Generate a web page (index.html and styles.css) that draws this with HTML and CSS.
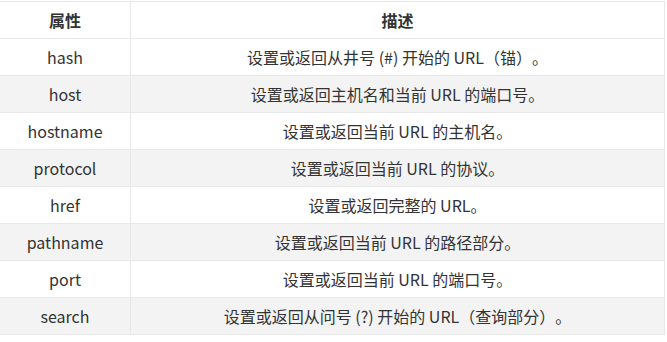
FILE: index.html
```html
<!DOCTYPE html>
<html lang="zh">
<head>
<meta charset="utf-8">
<link rel="stylesheet" href="styles.css">
</head>
<body>
<table class="ref">
  <colgroup><col class="c1"><col class="c2"></colgroup>
  <thead>
    <tr><th>属性</th><th>描述</th></tr>
  </thead>
  <tbody>
    <tr><td>hash</td><td>设置或返回从井号 (#) 开始的 URL（锚）。</td></tr>
    <tr><td>host</td><td>设置或返回主机名和当前 URL 的端口号。</td></tr>
    <tr><td>hostname</td><td>设置或返回当前 URL 的主机名。</td></tr>
    <tr><td>protocol</td><td>设置或返回当前 URL 的协议。</td></tr>
    <tr><td>href</td><td>设置或返回完整的 URL。</td></tr>
    <tr><td>pathname</td><td>设置或返回当前 URL 的路径部分。</td></tr>
    <tr><td>port</td><td>设置或返回当前 URL 的端口号。</td></tr>
    <tr><td>search</td><td>设置或返回从问号 (?) 开始的 URL（查询部分）。</td></tr>
  </tbody>
</table>
</body>
</html>
```

FILE: styles.css
```css
html, body {
  margin: 0;
  padding: 0;
  background: #fff;
}
body {
  padding-top: 1px;
  font-family: "Noto Sans CJK SC", "Open Sans", sans-serif;
  font-size: 16px;
  color: #333;
  text-spacing-trim: space-all;
}
.ref {
  border-collapse: collapse;
  width: 666px;
  margin-left: -1px;
  table-layout: fixed;
}
.c1 { width: 131px; }
.ref th, .ref td {
  border: 1px solid #e8e8e8;
  height: 37px;
  padding: 0 8px;
  text-align: center;
  vertical-align: middle;
  box-sizing: border-box;
  line-height: 20px;
}
.ref th {
  font-weight: bold;
  background: #fff;
}
.ref tbody tr:nth-child(even) td {
  background: #f3f3f3;
}
```
